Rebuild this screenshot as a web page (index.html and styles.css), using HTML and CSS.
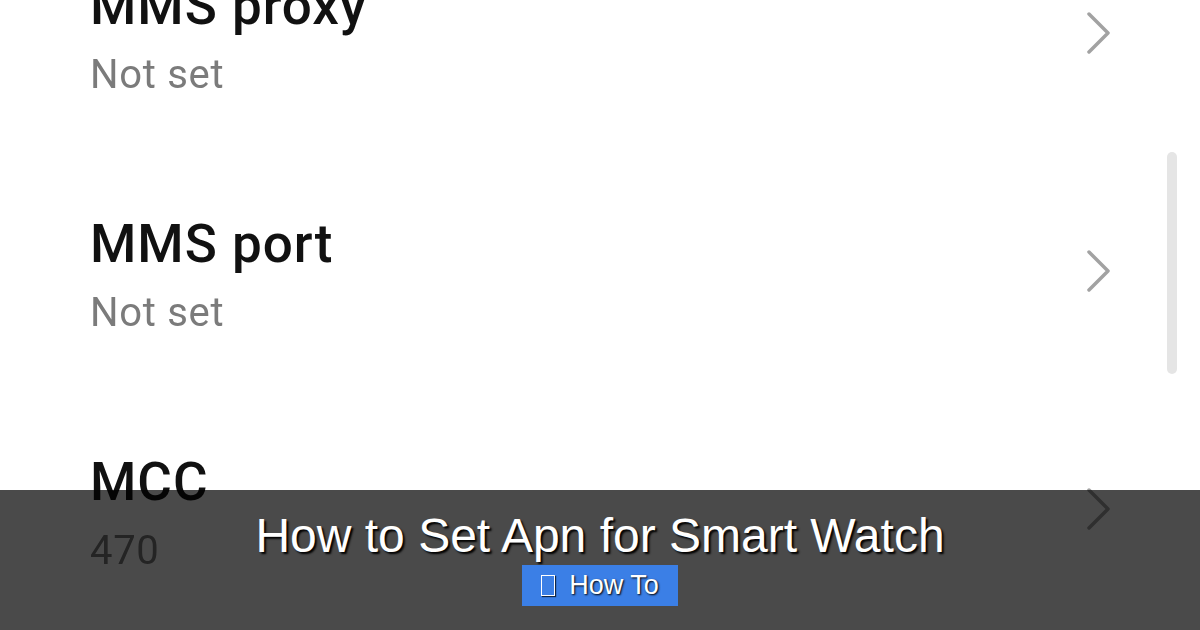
FILE: index.html
```html
<!DOCTYPE html>
<html lang="en">
<head>
<meta charset="utf-8">
<title>How to Set Apn for Smart Watch</title>
<link rel="stylesheet" href="styles.css">
</head>
<body>
<div class="screen">
  <ul class="settings">
    <li class="row">
      <div class="row-text">
        <div class="row-title">MMS proxy</div>
        <div class="row-value">Not set</div>
      </div>
      <svg class="chevron" viewBox="0 0 26 42" width="26" height="42"><polyline points="3,2 22,21 3,40"/></svg>
    </li>
    <li class="row">
      <div class="row-text">
        <div class="row-title">MMS port</div>
        <div class="row-value">Not set</div>
      </div>
      <svg class="chevron" viewBox="0 0 26 42" width="26" height="42"><polyline points="3,2 22,21 3,40"/></svg>
    </li>
    <li class="row">
      <div class="row-text">
        <div class="row-title">MCC</div>
        <div class="row-value">470</div>
      </div>
      <svg class="chevron" viewBox="0 0 26 42" width="26" height="42"><polyline points="3,2 22,21 3,40"/></svg>
    </li>
  </ul>
  <div class="scroll-thumb"></div>
</div>
<div class="caption">
  <h1 class="caption-title">How to Set Apn for Smart Watch</h1>
  <span class="badge"><span class="badge-icon"></span>How To</span>
</div>
</body>
</html>
```

FILE: styles.css
```css
html, body {
  margin: 0;
  padding: 0;
  width: 1200px;
  height: 630px;
  overflow: hidden;
  background: #fff;
}

.screen {
  position: relative;
  width: 1200px;
  height: 630px;
  overflow: hidden;
  filter: blur(0.6px);
}

.settings {
  list-style: none;
  margin: -82px 0 0;
  padding: 0;
}

.row {
  height: 238px;
  display: flex;
  align-items: center;
  justify-content: space-between;
  padding: 0 88px 0 90px;
  font-family: Roboto, "Liberation Sans", sans-serif;
}

.row-title {
  font-size: 53px;
  line-height: 62px;
  font-weight: 500;
  letter-spacing: 1px;
  color: #111;
}

.row-value {
  margin-top: 13px;
  font-size: 40px;
  line-height: 50px;
  letter-spacing: 0.7px;
  color: #7b7b7b;
}

.chevron {
  margin-bottom: 8px;
  fill: none;
  stroke: #a2a2a2;
  stroke-width: 3.5;
  stroke-linecap: round;
  stroke-linejoin: round;
}

/* scroll indicator drawn over the list */
.scroll-thumb {
  position: absolute;
  left: 1167px;
  top: 152px;
  width: 10px;
  height: 222px;
  border-radius: 5px;
  background: #e5e5e5;
}

/* translucent caption band over the bottom of the screen */
.caption {
  position: absolute;
  left: 0;
  bottom: 0;
  width: 1200px;
  height: 140px;
  box-sizing: border-box;
  padding-top: 18px;
  background: rgba(0, 0, 0, 0.71);
  display: flex;
  flex-direction: column;
  align-items: center;
  font-family: "Liberation Sans", Arial, sans-serif;
  color: #fff;
}

.caption-title {
  margin: 0;
  font-size: 48px;
  line-height: 55px;
  font-weight: 400;
  text-shadow: 2px 2px 2px #000;
}

.badge {
  margin-top: 2px;
  display: inline-flex;
  align-items: center;
  height: 41px;
  padding: 0 19px 0 19px;
  background: #3b7fe6;
  font-size: 27px;
  line-height: 41px;
  text-shadow: 1px 1px 2px #000;
}

.badge-icon {
  display: inline-block;
  width: 12px;
  height: 19px;
  margin-right: 14px;
  border: 1.5px solid #fff;
  box-shadow: 1px 1px 1px rgba(0, 0, 0, 0.7);
}
```
